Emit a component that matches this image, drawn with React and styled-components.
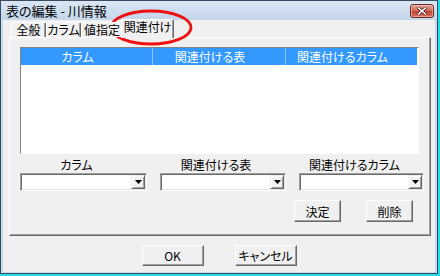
import React from "react";
import styled, { createGlobalStyle } from "styled-components";

const GlobalStyle = createGlobalStyle`
  body {
    margin: 0;
    background: #ffffff;
    font-family: "Noto Sans CJK JP", "Noto Sans", sans-serif;
    font-size: 12px;
    font-feature-settings: "palt";
    color: #000;
  }
`;

const Window = styled.div`
  position: relative;
  width: 440px;
  height: 276px;
  box-sizing: border-box;
  border-right: 2px solid #22dce9;
  border-bottom: 2px solid #22dce9;
`;

const Frame = styled.div`
  height: 100%;
  box-sizing: border-box;
  border: 1px solid #3b4c60;
  background: #c6d8ec;
  padding: 0 2px 1px 2px;
  display: flex;
  flex-direction: column;
`;

const TitleBar = styled.div`
  height: 19px;
  display: flex;
  align-items: center;
  justify-content: space-between;
  padding: 0 1px 0 3px;
  background: linear-gradient(to bottom, #dae6f3, #c3d6eb);
  margin: 0 -2px;
  padding-left: 5px;
  padding-right: 3px;
`;

const Title = styled.span`
  font-size: 13px;
  line-height: 19px;
  color: #000;
`;

const CloseButton = styled.div`
  width: 22px;
  height: 12px;
  border: 1px solid #6b2a24;
  border-radius: 3px;
  background: linear-gradient(to bottom, #e7a89b 0%, #d36b5c 48%, #c0432f 52%, #d4735f 100%);
  display: flex;
  align-items: center;
  justify-content: center;
  box-shadow: inset 0 0 0 1px rgba(255, 210, 200, 0.5);
`;

const Client = styled.div`
  flex: 1;
  background: #f0f0f0;
  display: flex;
  flex-direction: column;
  padding: 0 4px 0 6px;
`;

const TabStrip = styled.div`
  height: 17px;
  display: flex;
  align-items: flex-end;
  padding-left: 2px;
  position: relative;
  z-index: 1;
`;

const Tab = styled.div`
  width: ${(p) => p.$w}px;
  height: ${(p) => (p.$active ? 19 : 15)}px;
  margin: ${(p) => (p.$active ? "0 -2px -1px -2px" : "0")};
  box-sizing: border-box;
  background: #f0f0f0;
  border-top: 1px solid #ffffff;
  border-left: 1px solid #ffffff;
  border-right: 1px solid #696969;
  box-shadow: inset -1px 0 #a0a0a0;
  border-radius: 2px 2px 0 0;
  text-align: center;
  line-height: ${(p) => (p.$active ? 13 : 14)}px;
  white-space: nowrap;
  position: relative;
  z-index: ${(p) => (p.$active ? 2 : 1)};
`;

const Panel = styled.div`
  height: 199px;
  box-sizing: border-box;
  border: 1px solid;
  border-color: #ffffff #696969 #696969 #ffffff;
  box-shadow: inset -1px -1px #a0a0a0;
  padding: 9px 0 0 10px;
  display: flex;
  flex-direction: column;
`;

const ListView = styled.div`
  width: 399px;
  height: 107px;
  box-sizing: border-box;
  border: 1px solid;
  border-color: #828282 #ffffff #ffffff #828282;
  background: #ffffff;
  padding: 0 1px 0 0;
`;

const ListHeader = styled.div`
  display: grid;
  grid-template-columns: 132px 133px 1fr;
  height: 17px;
  background: #3399ff;
  color: #ffffff;
`;

const HeaderCell = styled.div`
  text-align: center;
  line-height: 17px;
  padding-right: 18px;
  border-right: ${(p) => (p.$last ? "none" : "1px solid #8fc3f6")};
  white-space: nowrap;
`;

const FieldGrid = styled.div`
  display: grid;
  grid-template-columns: 127px 126px 125px;
  column-gap: 13px;
  row-gap: 1px;
  margin-top: 4px;
`;

const FieldLabel = styled.div`
  text-align: center;
  line-height: 14px;
  padding-right: 14px;
  white-space: nowrap;
`;

const Combo = styled.div`
  height: 18px;
  box-sizing: border-box;
  border: 1px solid;
  border-color: #a0a0a0 #ffffff #ffffff #a0a0a0;
  box-shadow: inset 1px 1px #696969, inset -1px -1px #e3e3e3;
  background: #ffffff;
  display: flex;
  justify-content: flex-end;
  padding: 1px;
`;

const DropButton = styled.div`
  width: 14px;
  height: 14px;
  box-sizing: border-box;
  background: #f0f0f0;
  border: 1px solid;
  border-color: #f0f0f0 #696969 #696969 #f0f0f0;
  box-shadow: inset 1px 1px #ffffff, inset -1px -1px #a0a0a0;
  display: flex;
  align-items: center;
  justify-content: center;
`;

const ActionRow = styled.div`
  display: flex;
  justify-content: flex-end;
  gap: 25px;
  margin-top: 9px;
  padding-right: 17px;
`;

const Button = styled.div`
  width: ${(p) => p.$w}px;
  height: ${(p) => p.$h}px;
  box-sizing: border-box;
  background: #f0f0f0;
  border: 1px solid;
  border-color: #ffffff #696969 #696969 #ffffff;
  box-shadow: inset -1px -1px #a0a0a0;
  display: flex;
  align-items: center;
  justify-content: center;
  white-space: nowrap;
`;

const Footer = styled.div`
  display: flex;
  justify-content: center;
  gap: 31px;
  margin-top: 9px;
  padding-right: 2px;
`;

const Annotation = styled.svg`
  position: absolute;
  left: 108px;
  top: 8px;
  pointer-events: none;
`;

const Arrow = () => (
  <svg width="7" height="4" viewBox="0 0 7 4">
    <polygon points="0,0 7,0 3.5,4" fill="#000" />
  </svg>
);

const columns = ["カラム", "関連付ける表", "関連付けるカラム"];
const tabs = [
  { label: "全般", w: 35 },
  { label: "カラム", w: 35 },
  { label: "値指定", w: 42 },
  { label: "関連付け", w: 53, active: true },
];

export default function App() {
  return (
    <>
      <GlobalStyle />
      <Window>
        <Frame>
          <TitleBar>
            <Title>表の編集 - 川情報</Title>
            <CloseButton>
              <svg width="10" height="8" viewBox="0 0 10 8">
                <path d="M1.5 1 L8.5 7 M8.5 1 L1.5 7" stroke="#4a1a14" strokeWidth="3" strokeLinecap="square" />
                <path d="M1.5 1 L8.5 7 M8.5 1 L1.5 7" stroke="#ffffff" strokeWidth="1.6" strokeLinecap="square" />
              </svg>
            </CloseButton>
          </TitleBar>
          <Client>
            <TabStrip>
              {tabs.map((t) => (
                <Tab key={t.label} $w={t.w} $active={t.active}>
                  {t.label}
                </Tab>
              ))}
            </TabStrip>
            <Panel>
              <ListView>
                <ListHeader>
                  {columns.map((c, i) => (
                    <HeaderCell key={c} $last={i === columns.length - 1}>
                      {c}
                    </HeaderCell>
                  ))}
                </ListHeader>
              </ListView>
              <FieldGrid>
                {columns.map((c) => (
                  <FieldLabel key={c}>{c}</FieldLabel>
                ))}
                {columns.map((c) => (
                  <Combo key={c + "-combo"}>
                    <DropButton>
                      <Arrow />
                    </DropButton>
                  </Combo>
                ))}
              </FieldGrid>
              <ActionRow>
                <Button $w={47} $h={22}>決定</Button>
                <Button $w={47} $h={22}>削除</Button>
              </ActionRow>
            </Panel>
            <Footer>
              <Button $w={62} $h={21}>OK</Button>
              <Button $w={62} $h={21}>キャンセル</Button>
            </Footer>
          </Client>
        </Frame>
        <Annotation width="86" height="40" viewBox="0 0 86 40">
          <ellipse cx="43" cy="19.5" rx="40" ry="16.5" fill="none" stroke="#ee1111" strokeWidth="2.8" />
        </Annotation>
      </Window>
    </>
  );
}
